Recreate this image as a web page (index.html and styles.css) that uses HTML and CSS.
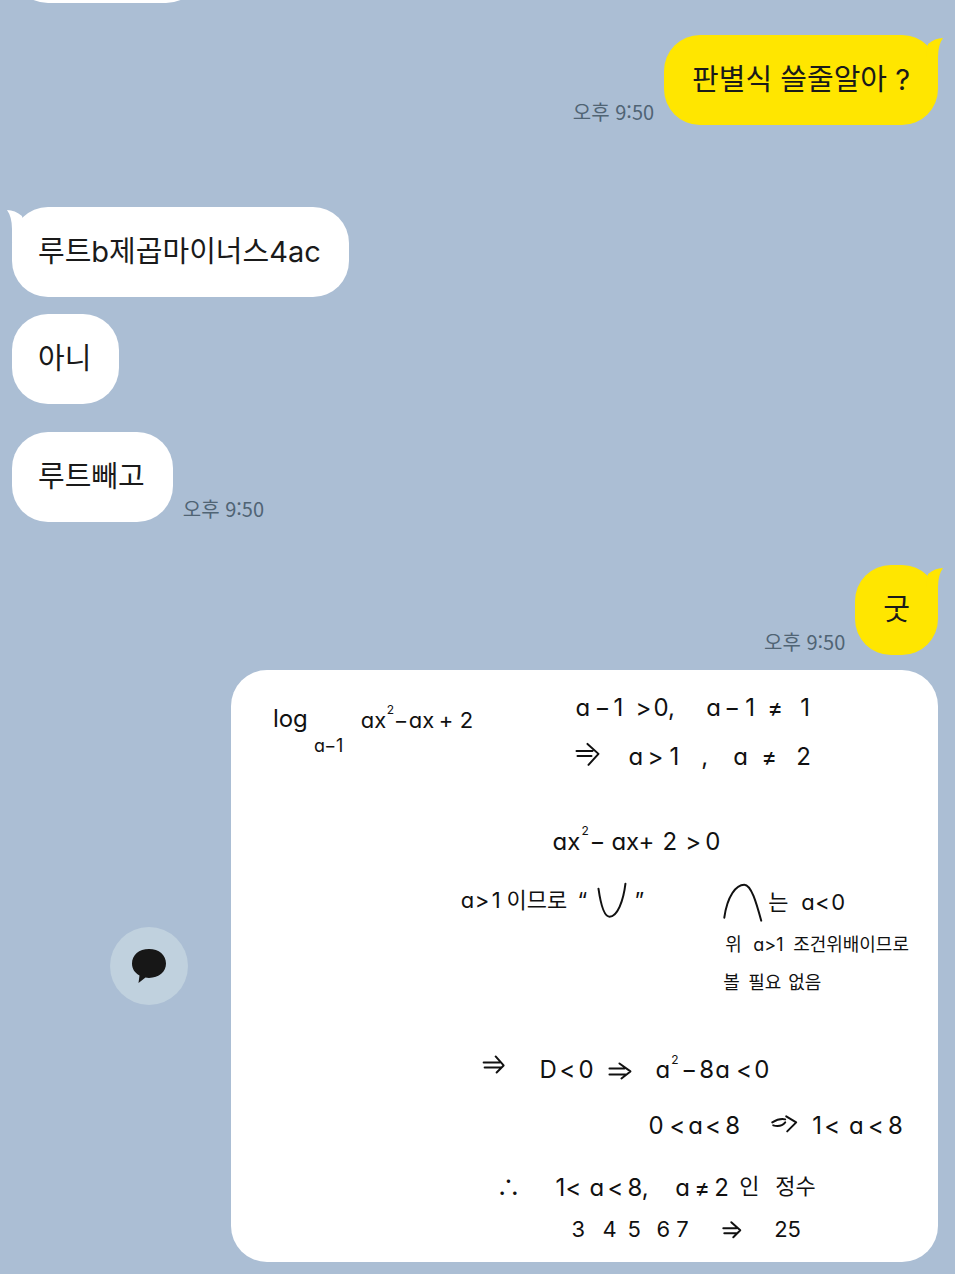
FILE: index.html
```html
<!DOCTYPE html>
<html lang="ko">

<head>
    <meta charset="UTF-8">
    <meta name="viewport" content="width=device-width, initial-scale=1.0">
    <title>채팅</title>

    <link rel="stylesheet" href="styles.css">
</head>

<body>
    <main class="chat">
        <div class="row cut">
            <div class="bubble"></div>
        </div>

        <div class="row mine">
            <time class="time" datetime="21:50">오후 9:50</time>
            <div class="bubble">
                판별식 쓸줄알아 ?
                <svg class="tail" viewBox="0 0 20 36" aria-hidden="true"><path d="M4 7Q11 1 19 1Q14 8 14 20V34L2 20Z"/></svg>
            </div>
        </div>

        <div class="row first">
            <div class="bubble">
                루트b제곱마이너스4ac
                <svg class="tail" viewBox="0 0 20 36" aria-hidden="true"><path d="M16 7Q9 1 1 1Q6 8 6 20V34L18 20Z"/></svg>
            </div>
        </div>
        <div class="row next">
            <div class="bubble">아니</div>
        </div>
        <div class="row last">
            <div class="bubble">루트빼고</div>
            <time class="time" datetime="21:50">오후 9:50</time>
        </div>

        <div class="row mine reply">
            <time class="time" datetime="21:50">오후 9:50</time>
            <div class="bubble">
                굿
                <svg class="tail" viewBox="0 0 20 36" aria-hidden="true"><path d="M4 7Q11 1 19 1Q14 8 14 20V34L2 20Z"/></svg>
            </div>
        </div>

        <div class="row mine photo">
            <button class="share" type="button" aria-label="공유">
                <svg viewBox="0 0 36 36" aria-hidden="true"><path d="M18 1C8 1 1 7 1 15.500c0 5.500 3 9.500 7.500 12L7.500 35l7-5.500c1 .3 2.300.4 3.500.4 10 0 17-6 17-14.400S28 1 18 1Z"/></svg>
            </button>
            <div class="note">
                <svg viewBox="0 0 708 593">
                    <!-- log expression -->
                    <text y="57"><tspan x="42">log</tspan></text>
                    <text class="tiny" y="82"><tspan x="83">a−1</tspan></text>
                    <text class="small" y="58"><tspan x="130">ax</tspan><tspan x="163">−</tspan><tspan x="178">ax</tspan><tspan x="208">+</tspan><tspan x="229">2</tspan></text>
                    <text class="power" x="156" y="44">2</text>

                    <!-- base conditions -->
                    <text y="46"><tspan x="345">a</tspan><tspan x="364">−</tspan><tspan x="383">1</tspan><tspan x="405">&gt;</tspan><tspan x="423">0,</tspan><tspan x="476">a</tspan><tspan x="494">−</tspan><tspan x="515">1</tspan><tspan x="537">≠</tspan><tspan x="570">1</tspan></text>
                    <path d="M346 81H362M347 86H361M357 74L368 84 358 95"/>
                    <text y="95"><tspan x="398">a</tspan><tspan x="417">&gt;</tspan><tspan x="439">1</tspan><tspan x="471">,</tspan><tspan x="503">a</tspan><tspan x="531">≠</tspan><tspan x="566">2</tspan></text>

                    <!-- parabola opens up, not down -->
                    <text y="180"><tspan x="322">ax</tspan><tspan x="359">−</tspan><tspan x="381">ax</tspan><tspan x="408">+</tspan><tspan x="432">2</tspan><tspan x="455">&gt;</tspan><tspan x="475">0</tspan></text>
                    <text class="power" x="351" y="165">2</text>
                    <text class="small" y="238"><tspan x="230">a</tspan><tspan x="244">&gt;</tspan><tspan x="261">1</tspan><tspan x="276">이므로</tspan><tspan x="347">“</tspan><tspan x="404">”</tspan></text>
                    <path d="M368 219C370 233 373 247 379 247 387 247 393 231 395 214"/>
                    <path d="M494 248C497 226 506 215 514 215 521 215 526 233 531 251"/>
                    <text class="small" y="240"><tspan x="538">는</tspan><tspan x="571">a</tspan><tspan x="585">&lt;</tspan><tspan x="601">0</tspan></text>
                    <text class="tiny" y="281"><tspan x="495">위</tspan><tspan x="523">a&gt;1</tspan><tspan x="563">조건위배이므로</tspan></text>
                    <text class="tiny" y="319"><tspan x="493">볼</tspan><tspan x="518">필요</tspan><tspan x="558">없음</tspan></text>

                    <!-- discriminant -->
                    <path d="M253 393H269M254 398H271M265 387L273 396 266 403"/>
                    <text y="409"><tspan x="309">D</tspan><tspan x="329">&lt;</tspan><tspan x="348">0</tspan><tspan x="425">a</tspan><tspan x="451">−</tspan><tspan x="469">8</tspan><tspan x="485">a</tspan><tspan x="506">&lt;</tspan><tspan x="524">0</tspan></text>
                    <text class="power" x="441" y="395">2</text>
                    <path d="M379 399H394M379 405H395M389 394L400 402 391 409"/>
                    <text y="465"><tspan x="418">0</tspan><tspan x="439">&lt;</tspan><tspan x="458">a</tspan><tspan x="475">&lt;</tspan><tspan x="495">8</tspan><tspan x="582">1</tspan><tspan x="594">&lt;</tspan><tspan x="619">a</tspan><tspan x="638">&lt;</tspan><tspan x="658">8</tspan></text>
                    <path d="M542 453C547 450 551 449 555 450M543 456Q551 458 555 453M556 447L566 453 557 462"/>

                    <!-- answer -->
                    <text y="527"><tspan x="266">∴</tspan><tspan x="325">1</tspan><tspan x="335">&lt;</tspan><tspan x="359">a</tspan><tspan x="377">&lt;</tspan><tspan x="397">8,</tspan><tspan x="445">a</tspan><tspan x="464">≠</tspan><tspan x="484">2</tspan></text>
                    <text class="small" y="525"><tspan x="509">인</tspan><tspan x="545">정수</tspan></text>
                    <text class="small" y="568"><tspan x="341">3</tspan><tspan x="372">4</tspan><tspan x="397">5</tspan><tspan x="426">6</tspan><tspan x="446">7</tspan><tspan x="544">25</tspan></text>
                    <path d="M493 559H506M494 564H507M501 553L510 561 503 568"/>
                </svg>
            </div>
        </div>
    </main>
</body>

</html>
```
FILE: styles.css
```css
* {
    box-sizing: border-box;
}

body {
    margin: 0;
    background-color: #abbed4;
    color: #1a1a1a;
    font-family: "Noto Sans CJK KR", sans-serif;
}

.chat {
    min-height: 100vh;
    padding: 0 17px 11px 12px;
    overflow: hidden;
}

.row {
    display: flex;
    align-items: flex-end;
    gap: 10px;
}

.bubble {
    position: relative;
    min-height: 90px;
    padding: 24px 28px 24px 26px;
    border-radius: 36px;
    background-color: #fff;
    font-family: Inter, "Noto Sans CJK KR", sans-serif;
    font-size: 29px;
    line-height: 42px;
}

.time {
    margin-bottom: 1px;
    color: #506474;
    font-size: 20px;
    line-height: 24px;
}

/* message scrolled past the top edge */
.cut {
    margin-top: -87px;
    margin-bottom: 32px;
}

.cut .bubble {
    width: 190px;
}

.mine {
    justify-content: flex-end;
}

.mine .bubble {
    padding: 24px 28px;
    background-color: #ffe600;
}

.tail {
    position: absolute;
    top: 2px;
    left: -6px;
    width: 20px;
    height: 36px;
    fill: #fff;
}

.mine .tail {
    left: auto;
    right: -6px;
    fill: #ffe600;
}

.first {
    margin-top: 82px;
}

.next {
    margin-top: 17px;
}

.last {
    margin-top: 28px;
}

.reply {
    margin-top: 43px;
}

.photo {
    align-items: center;
    gap: 43px;
    margin-top: 15px;
    padding-left: 98px;
}

.share {
    display: flex;
    align-items: center;
    justify-content: center;
    flex: none;
    width: 78px;
    height: 78px;
    padding: 0;
    border: none;
    border-radius: 50%;
    background-color: #c0d1de;
    cursor: pointer;
}

.share svg {
    width: 36px;
    height: 36px;
    fill: #171717;
}

.note {
    flex: 1;
    border-radius: 36px;
    background-color: #fff;
    overflow: hidden;
}

.note svg {
    display: block;
    width: 100%;
}

/* handwriting on the note */
.note text {
    fill: #111;
    font-family: Inter, "Noto Sans CJK KR", sans-serif;
    font-feature-settings: "cv11";
    font-size: 24px;
}

.note .small {
    font-size: 22px;
}

.note .tiny {
    font-size: 18px;
}

.note .power {
    font-size: 12px;
}

.note path {
    fill: none;
    stroke: #111;
    stroke-width: 2;
    stroke-linecap: round;
    stroke-linejoin: round;
}
```
